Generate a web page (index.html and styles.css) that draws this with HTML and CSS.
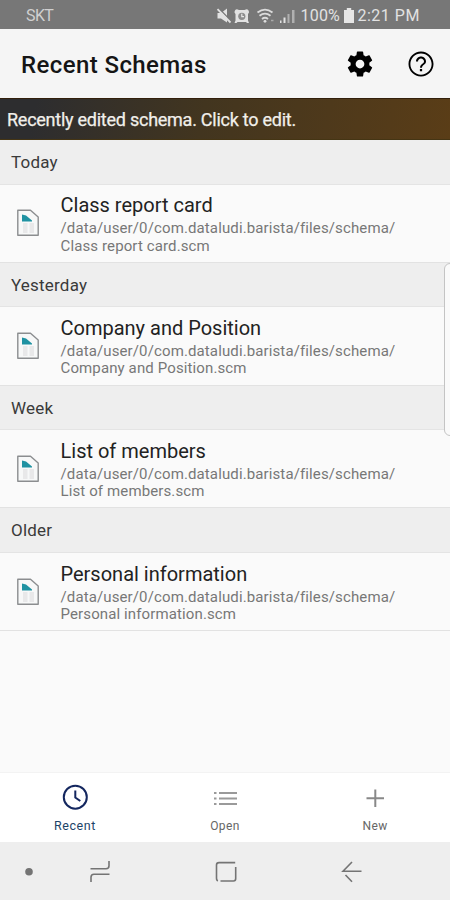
FILE: index.html
```html
<!DOCTYPE html>
<html lang="en">
<head>
<meta charset="utf-8">
<title>Recent Schemas</title>
<link rel="stylesheet" href="styles.css">
</head>
<body>
<svg width="0" height="0" class="defs" aria-hidden="true">
  <symbol id="doc" viewBox="0 0 24 28">
    <path d="M1.800 1.300H14.500L22.200 8V26.300H1.800Z" fill="#f7f8f8" stroke="#8b8d8f" stroke-width="1.400" stroke-linejoin="round"/>
    <path d="M7 14h4.500v10H7zM13.500 14H18v10h-4.500z" fill="#e8e8e9"/>
    <path d="M6 5.500L10 6.500L16 11.600V12.600H6Z" fill="#1f92a2"/>
  </symbol>
</svg>
<div class="status">
  <span class="carrier">SKT</span>
  <svg class="status-icons" width="82" height="20" viewBox="0 0 82 20">
    <g fill="#e2e2e2">
      <path d="M1.500 7H5L11 2.500v14L5 12.500H1.500z"/>
      <path d="M18.500 6.500Q18.500 3.500 21 3.300L23 4h5.500L30.500 3.300Q33 3.500 33 6.500L32 8v6.500l1 2.500h-2l-1-1h-8.500l-1 1h-2l1-2.500V8z"/>
    </g>
    <path d="M2.500 2L15.500 15.500" stroke="#777" stroke-width="1.500"/>
    <path d="M1.500 3.200L14.500 16.500" stroke="#e2e2e2" stroke-width="1.800"/>
    <circle cx="25.800" cy="10.300" r="3.600" fill="#8d8d8d"/>
    <path d="M25.800 7.700v2.900h2.200" stroke="#e8e8e8" stroke-width="1.200" fill="none"/>
    <g fill="none" stroke="#dcdcdc" stroke-width="1.800">
      <path d="M41.500 6.500Q49 .8 56.500 6.500M43.500 9.800Q49 5.500 54.500 9.800M46 13Q49 10.500 52 13"/>
    </g>
    <circle cx="49" cy="15.300" r="1.400" fill="#ddd"/>
    <path d="M55 14.500h2.500" stroke="#aaa" stroke-width="1.500"/>
    <path d="M64 14.500v2.500h1.500v-2.500zM67.500 11.500V17h2v-5.500z" fill="#e2e2e2"/>
    <path d="M71.500 8V17h2V8zM76 4V17h2.500V4z" fill="#b0b0b0"/>
  </svg>
  <span class="percent">100%</span>
  <svg class="battery" width="12" height="18" viewBox="0 0 12 18"><path d="M1 3h2.800V1h4.400v2H11v13H1z" fill="#e6e6e6"/></svg>
  <span class="time">2:21 PM</span>
</div>
<header class="appbar">
  <h1><span>Recent Schemas</span></h1>
  <svg class="gear" width="30" height="30" viewBox="0 0 24 24"><path d="M19.430 12.980c.04-.32.07-.64.07-.98s-.03-.66-.07-.98l2.110-1.650c.19-.15.24-.42.120-.64l-2-3.460c-.12-.22-.39-.3-.61-.22l-2.490 1c-.52-.4-1.080-.73-1.690-.98l-.38-2.650C14.460 2.180 14.250 2 14 2h-4c-.25 0-.46.18-.49.42l-.38 2.650c-.61.25-1.170.59-1.690.98l-2.490-1c-.23-.09-.49 0-.61.22l-2 3.460c-.13.22-.07.49.12.64l2.110 1.650c-.04.32-.07.65-.07.98s.03.66.07.98l-2.110 1.650c-.19.15-.24.42-.12.64l2 3.460c.12.22.39.3.61.22l2.490-1c.52.4 1.080.73 1.690.98l.38 2.650c.03.24.24.42.49.42h4c.25 0 .46-.18.49-.42l.38-2.650c.61-.25 1.170-.59 1.690-.98l2.490 1c.23.09.49 0 .61-.22l2-3.460c.12-.22.07-.49-.12-.64l-2.110-1.650zM12 15.500c-1.930 0-3.500-1.570-3.500-3.500s1.570-3.500 3.500-3.500 3.500 1.570 3.500 3.500-1.570 3.500-3.500 3.500z"/></svg>
  <svg class="help" width="30" height="30" viewBox="0 0 24 24"><path d="M11.100 17.800h1.800v-1.800h-1.800zM12 2C6.480 2 2 6.480 2 12s4.480 10 10 10 10-4.480 10-10S17.520 2 12 2zm0 18.500c-4.700 0-8.500-3.800-8.500-8.500S7.300 3.500 12 3.500s8.500 3.800 8.500 8.500-3.800 8.500-8.500 8.500zM12 6c-2.210 0-4 1.790-4 4h1.600c0-1.300 1.100-2.400 2.400-2.400s2.400 1.100 2.400 2.400c0 2-3.200 1.750-3.200 5h1.600c0-2.250 3.200-2.500 3.200-5 0-2.210-1.790-4-4-4z"/></svg>
</header>
<div class="banner"><span>Recently edited schema. Click to edit.</span></div>
<main>
  <section><h2>Today</h2>
    <div class="item"><svg class="doc" width="24" height="28"><use href="#doc"/></svg><div class="text"><h3>Class report card</h3><p>/data/user/0/com.dataludi.barista/files/schema/</p><p>Class report card.scm</p></div></div></section>
  <section><h2>Yesterday</h2>
    <div class="item"><svg class="doc" width="24" height="28"><use href="#doc"/></svg><div class="text"><h3>Company and Position</h3><p>/data/user/0/com.dataludi.barista/files/schema/</p><p>Company and Position.scm</p></div></div></section>
  <section><h2>Week</h2>
    <div class="item"><svg class="doc" width="24" height="28"><use href="#doc"/></svg><div class="text"><h3>List of members</h3><p>/data/user/0/com.dataludi.barista/files/schema/</p><p>List of members.scm</p></div></div></section>
  <section><h2>Older</h2>
    <div class="item"><svg class="doc" width="24" height="28"><use href="#doc"/></svg><div class="text"><h3>Personal information</h3><p>/data/user/0/com.dataludi.barista/files/schema/</p><p>Personal information.scm</p></div></div></section>
</main>
<nav class="tabs">
  <div class="tab active"><svg width="30" height="30" viewBox="0 0 30 30" fill="none" stroke="#14275f" stroke-width="2"><circle cx="15.300" cy="15.200" r="11.500"/><path d="M15.300 8.500v7l5 3.500"/></svg><span>Recent</span></div>
  <div class="tab"><svg width="30" height="30" viewBox="0 0 30 30" fill="none" stroke="#9a9a9a" stroke-width="2"><path d="M4 11h2.500M4 16.500h2.500M4 22h2.500M9 11h18M9 16.500h18M9 22h18"/></svg><span>Open</span></div>
  <div class="tab"><svg width="30" height="30" viewBox="0 0 30 30" fill="none" stroke="#888" stroke-width="2"><path d="M6.500 16.200h17.500M15.300 7.500v17.500"/></svg><span>New</span></div>
</nav>
<footer class="sysnav">
  <svg width="450" height="58" viewBox="0 0 450 58" fill="none" stroke="#747474" stroke-width="1.600">
    <circle cx="29" cy="29.700" r="3.800" fill="#747474" stroke="none"/>
    <path d="M90.500 26.800h15.500q3 0 3-3V19M109.500 32.300H94q-3 0-3 3V40"/>
    <path d="M235.200 20.600h-16.200q-2.500 0-2.500 2.500V36q0 2.500 1.500 2.800M220.500 39h13q2.200 0 2.200-2.500V25"/>
    <path d="M361.500 29.300h-18.500L352 20M345.500 33L352 39.800"/>
  </svg>
</footer>
<div class="edge-panel"></div>
</body>
</html>
```
FILE: styles.css
```css
* { box-sizing: border-box; }
body {
  margin: 0;
  width: 450px;
  height: 900px;
  overflow: hidden;
  position: relative;
  display: flex;
  flex-direction: column;
  background: #fafafa;
  font-family: Roboto, sans-serif;
  color: #222;
}
h1, h2, h3, p { margin: 0; font-weight: 400; white-space: nowrap; }
svg { display: block; flex: none; }
.defs { position: absolute; }
.status {
  height: 29px;
  flex: none;
  display: flex;
  align-items: center;
  padding: 2px 0 0 26px;
  background: #777;
  color: #e2e2e2;
  font-size: 16px;
  white-space: nowrap;
}
.carrier { width: 189.500px; color: #d0d0d0; letter-spacing: -0.6px; }
.status-icons { margin-right: 3px; }
.percent { width: 42px; letter-spacing: 0.2px; }
.battery { margin-right: 3px; }
.time { letter-spacing: 0.5px; }
.appbar {
  height: 69px;
  flex: none;
  display: flex;
  align-items: center;
  padding-left: 21px;
  background: #f5f5f5;
}
h1 { width: 324px; padding-top: 2px; font-size: 24px; font-weight: 500; letter-spacing: 0.4px; color: #151515; }
.help { margin-left: 30.500px; }
.banner {
  height: 42px;
  flex: none;
  display: flex;
  align-items: center;
  padding: 1px 0 0 7px;
  background: linear-gradient(100deg, #2d2d2f 8%, #42351f 45%, #5a3d17);
  border-top: 1px solid #33200c;
  border-bottom: 1px solid #453514;
  color: #f1efea;
  font-size: 18px;
  letter-spacing: -0.25px;
  -webkit-text-stroke: 0.25px #f1efea;
  white-space: nowrap;
}
section { height: 122.800px; }
h2 {
  height: 44.500px;
  line-height: 44px;
  padding-left: 11px;
  background: #eee;
  border-bottom: 1px solid #e4e4e4;
  font-size: 17px;
  letter-spacing: 0.2px;
  color: #3a3a3a;
}
.item {
  height: 78.300px;
  display: flex;
  align-items: center;
  padding-left: 16px;
  border-bottom: 1px solid #e2e2e2;
}
.text { margin-left: 20.500px; padding-top: 1px; }
h3 { margin-bottom: 1px; font-size: 20px; line-height: 27px; }
p { font-size: 15px; line-height: 17.300px; letter-spacing: 0.120px; color: #777; }
.tabs {
  height: 70px;
  margin-top: auto;
  flex: none;
  display: flex;
  background: #fff;
  border-top: 1px solid #f3f3f3;
}
.tab {
  flex: 1;
  display: flex;
  flex-direction: column;
  align-items: center;
  padding-top: 9px;
  font-size: 12px;
  letter-spacing: 0.4px;
  color: #666;
}
.tab span { margin-top: 7px; }
.tab.active { color: #1c4468; }
.tab.active span { margin-top: 6px; font-size: 12.500px; letter-spacing: 0.600px; }
.sysnav { height: 58px; flex: none; background: #eee; }
.edge-panel {
  position: absolute;
  left: 444px;
  top: 263px;
  width: 12px;
  height: 173px;
  border: 1px solid #c4c4c4;
  border-radius: 8px;
  background: #fafafa;
}
```
